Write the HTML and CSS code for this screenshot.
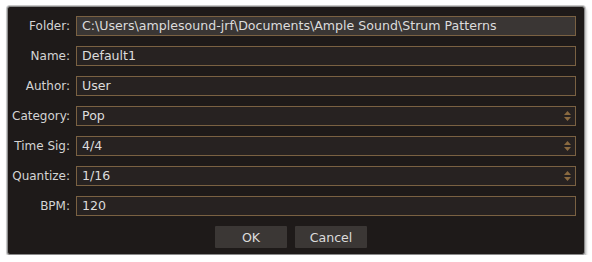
FILE: index.html
```html
<!DOCTYPE html>
<html lang="en">
<head>
  <meta charset="UTF-8">
  <title>Save Strum Pattern</title>
  <link rel="stylesheet" href="styles.css">
</head>
<body>
  <div class="dialog">
    <form class="fields">
      <label class="label">Folder:</label>
      <div class="field field-path">C:\Users\amplesound-jrf\Documents\Ample Sound\Strum Patterns</div>

      <label class="label">Name:</label>
      <div class="field">Default1</div>

      <label class="label">Author:</label>
      <div class="field">User</div>

      <label class="label">Category:</label>
      <div class="field select">Pop
        <svg class="spin" width="7" height="10" viewBox="0 0 7 10"><path d="M3.5 0 L7 4 L0 4 Z M0 6 L7 6 L3.5 10 Z" fill="#8a6a40"/></svg>
      </div>

      <label class="label">Time Sig:</label>
      <div class="field select">4/4
        <svg class="spin" width="7" height="10" viewBox="0 0 7 10"><path d="M3.5 0 L7 4 L0 4 Z M0 6 L7 6 L3.5 10 Z" fill="#8a6a40"/></svg>
      </div>

      <label class="label">Quantize:</label>
      <div class="field select">1/16
        <svg class="spin" width="7" height="10" viewBox="0 0 7 10"><path d="M3.5 0 L7 4 L0 4 Z M0 6 L7 6 L3.5 10 Z" fill="#8a6a40"/></svg>
      </div>

      <label class="label">BPM:</label>
      <div class="field">120</div>
    </form>

    <div class="buttons">
      <button type="button" class="btn">OK</button>
      <button type="button" class="btn">Cancel</button>
    </div>
  </div>
</body>
</html>
```

FILE: styles.css
```css
body {
  margin: 0;
  background-color: #fff;
  font-family: "DejaVu Sans", Verdana, sans-serif;
  font-size: 12.6px;
}
.dialog {
  margin: 6px 0 0 7px;
  width: 576px;
  height: 238px;
  background-color: #1e1a19;
  border: 1px solid #8a8a8a;
  border-radius: 3px;
  box-shadow: 0 0 0 1px #c8c8c8, 1px 2px 3px rgba(0, 0, 0, 0.35);
  padding-top: 9px;
  box-sizing: content-box;
}
.fields {
  display: grid;
  grid-template-columns: 62px 1fr;
  column-gap: 6px;
  row-gap: 10px;
  padding-right: 8px;
  margin: 0;
}
.label {
  text-align: right;
  color: #d4d4d4;
  font-size: 12px;
  line-height: 20px;
  height: 20px;
  white-space: nowrap;
}
.field {
  position: relative;
  height: 18px;
  line-height: 18px;
  border: 1px solid #7a6142;
  background-color: #272221;
  color: #dcdcdc;
  padding-left: 5px;
  white-space: nowrap;
  overflow: hidden;
}
.field-path {
  background-color: #3a3634;
}
.spin {
  position: absolute;
  right: 4px;
  top: 4px;
}
.buttons {
  display: flex;
  justify-content: center;
  gap: 8px;
  margin-top: 10px;
  padding-right: 10px;
}
.btn {
  width: 72px;
  height: 22px;
  border: none;
  border-radius: 1px;
  background-color: #3b3735;
  color: #dcdcdc;
  font-family: "DejaVu Sans", Verdana, sans-serif;
  font-size: 12.6px;
  padding: 0;
}
```
